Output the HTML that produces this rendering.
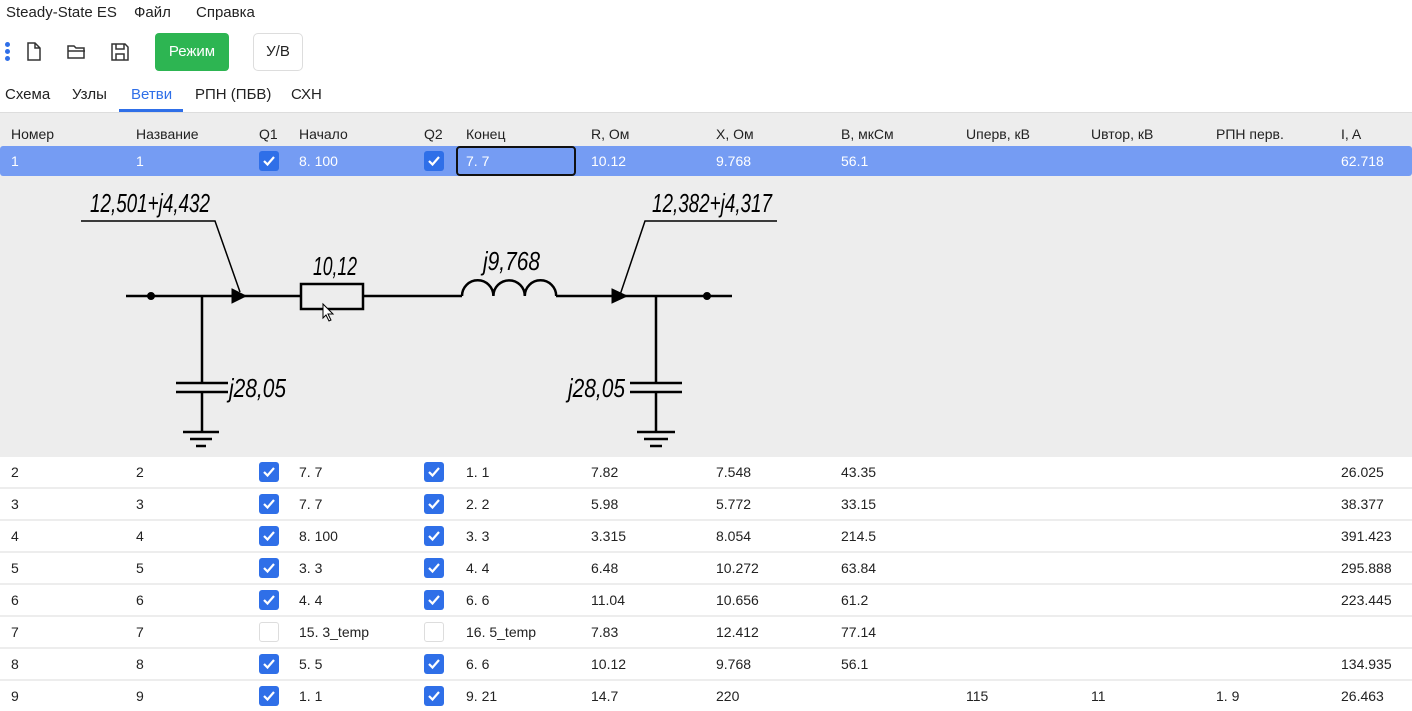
<!DOCTYPE html>
<html><head><meta charset="utf-8"><style>
*{margin:0;padding:0;box-sizing:border-box}
body{width:1412px;height:711px;overflow:hidden;background:#fff;font-family:"Liberation Sans","DejaVu Sans",sans-serif;font-size:14px;color:#222;position:relative}
.a{position:absolute;white-space:nowrap}
.row{position:absolute;left:0;width:1412px;height:30px;background:#fff}
.row span{position:absolute;top:7px}
.cb{position:absolute;width:20px;height:20px;border-radius:3px;background:#2f6fe8;top:5px}
.cb.e{background:#fff;border:1px solid #ddd}
.cb svg{position:absolute;left:3px;top:4px}
</style></head><body>
<div class="a" style="left:6px;top:4px;font-size:15px">Steady-State ES</div>
<div class="a" style="left:134px;top:4px;font-size:15px">Файл</div>
<div class="a" style="left:196px;top:4px;font-size:15px">Справка</div>
<div class="a" style="left:5px;top:42px;width:5px;height:5px;border-radius:50%;background:#2f6fe8"></div>
<div class="a" style="left:5px;top:49px;width:5px;height:5px;border-radius:50%;background:#2f6fe8"></div>
<div class="a" style="left:5px;top:56px;width:5px;height:5px;border-radius:50%;background:#2f6fe8"></div>
<svg class="a" style="left:25px;top:42px" width="18" height="20" viewBox="0 0 18 20" fill="none" stroke="#333" stroke-width="1.5"><path d="M3 1h7l5 5v12H3z M10 1v5h5"/></svg>
<svg class="a" style="left:66px;top:43px" width="22" height="18" viewBox="0 0 22 18" fill="none" stroke="#333" stroke-width="1.5"><path d="M2 3h6l2 2h8v10H2z M2 8h17"/></svg>
<svg class="a" style="left:110px;top:42px" width="20" height="20" viewBox="0 0 20 20" fill="none" stroke="#333" stroke-width="1.5"><path d="M2 2h13l3 3v13H2z M6 2v5h8V2 M6 18v-6h8v6"/></svg>
<div class="a" style="left:155px;top:33px;width:74px;height:38px;border-radius:4px;background:#2db552;color:#fff;font-size:15px;text-align:center;line-height:38px">Режим</div>
<div class="a" style="left:253px;top:33px;width:50px;height:38px;border-radius:5px;border:1px solid #ddd;font-size:15px;text-align:center;line-height:36px">У/В</div>
<div class="a" style="left:5px;top:86px;font-size:15px">Схема</div>
<div class="a" style="left:72px;top:86px;font-size:15px">Узлы</div>
<div class="a" style="left:131px;top:86px;font-size:15px;color:#2f6fe8">Ветви</div>
<div class="a" style="left:119px;top:109px;width:64px;height:3px;background:#2f6fe8"></div>
<div class="a" style="left:195px;top:86px;font-size:15px">РПН (ПБВ)</div>
<div class="a" style="left:291px;top:86px;font-size:15px">СХН</div>
<div class="a" style="left:0;top:112px;width:1412px;height:599px;background:#ededed;border-top:1px solid #ddd"></div>
<div class="a" style="left:11px;top:126px">Номер</div><div class="a" style="left:136px;top:126px">Название</div><div class="a" style="left:259px;top:126px">Q1</div><div class="a" style="left:299px;top:126px">Начало</div><div class="a" style="left:424px;top:126px">Q2</div><div class="a" style="left:466px;top:126px">Конец</div><div class="a" style="left:591px;top:126px">R, Ом</div><div class="a" style="left:716px;top:126px">X, Ом</div><div class="a" style="left:841px;top:126px">B, мкСм</div><div class="a" style="left:966px;top:126px">Uперв, кВ</div><div class="a" style="left:1091px;top:126px">Uвтор, кВ</div><div class="a" style="left:1216px;top:126px">РПН перв.</div><div class="a" style="left:1341px;top:126px">I, A</div>
<div class="row" style="top:146px;background:#759cf3;color:#fff;border-radius:3px"><span style="left:11px">1</span><span style="left:136px">1</span><div class="cb" style="left:259px"><svg width="14" height="12"><path d="M2 6l3.5 3.5L12 2" stroke="#fff" stroke-width="2.2" fill="none"/></svg></div><span style="left:299px">8. 100</span><div class="cb" style="left:424px"><svg width="14" height="12"><path d="M2 6l3.5 3.5L12 2" stroke="#fff" stroke-width="2.2" fill="none"/></svg></div><div style="position:absolute;left:456px;top:0;width:120px;height:30px;border:2px solid #111;border-radius:4px"></div><span style="left:466px">7. 7</span><span style="left:591px">10.12</span><span style="left:716px">9.768</span><span style="left:841px">56.1</span><span style="left:1341px">62.718</span></div>
<svg class="a" style="left:0;top:176px" width="800" height="280" viewBox="0 176 800 280" font-family="Liberation Sans, sans-serif" font-style="italic" font-weight="300" font-size="26" fill="none" stroke="#000">
<g stroke-width="2.5"><path d="M126 296H301M363 296H462M556 296H732"/><rect x="301" y="284" width="62" height="25"/><path d="M462 296a15.7 15.7 0 0 1 31.4 0a15.7 15.7 0 0 1 31.4 0a15.7 15.7 0 0 1 31.4 0"/>
<path d="M202 296V383M202 392V432M176 383H228M176 392H228M656 296V383M656 392V432M630 383H682M630 392H682M183 432H219M190 439H212M196 446H206M637 432H675M644 439H668M650 446H662"/></g>
<g stroke-width="1.5"><path d="M81 221H215L240 292M777 221H645L620 295"/></g>
<path d="M232 289L246 296L232 303Z M612 289L627 296L612 303Z" fill="#000"/>
<circle cx="151" cy="296" r="3.5" fill="#000"/><circle cx="707" cy="296" r="3.5" fill="#000"/>
<path d="M323 304v14l3-3 3 6 2-1-3-6h5z" fill="#fff" stroke="#000" stroke-width="1"/>
<g fill="#000" stroke="none"><text x="90" y="212" textLength="120" lengthAdjust="spacingAndGlyphs">12,501+j4,432</text><text x="652" y="212" textLength="120" lengthAdjust="spacingAndGlyphs">12,382+j4,317</text><text x="313" y="275" textLength="44" lengthAdjust="spacingAndGlyphs">10,12</text><text x="483" y="270" textLength="57" lengthAdjust="spacingAndGlyphs">j9,768</text><text x="229" y="397" textLength="57" lengthAdjust="spacingAndGlyphs">j28,05</text><text x="568" y="397" textLength="57" lengthAdjust="spacingAndGlyphs">j28,05</text></g>
</svg>
<div id="rows"></div>
<script>
var d=[["2","2",1,"7. 7",1,"1. 1","7.82","7.548","43.35","","","","26.025"],["3","3",1,"7. 7",1,"2. 2","5.98","5.772","33.15","","","","38.377"],["4","4",1,"8. 100",1,"3. 3","3.315","8.054","214.5","","","","391.423"],["5","5",1,"3. 3",1,"4. 4","6.48","10.272","63.84","","","","295.888"],["6","6",1,"4. 4",1,"6. 6","11.04","10.656","61.2","","","","223.445"],["7","7",0,"15. 3_temp",0,"16. 5_temp","7.83","12.412","77.14","","","",""],["8","8",1,"5. 5",1,"6. 6","10.12","9.768","56.1","","","","134.935"],["9","9",1,"1. 1",1,"9. 21","14.7","220","","115","11","1. 9","26.463"]];
var xs=[11,136,259,299,424,466,591,716,841,966,1091,1216,1341],h="";
var ck='<svg width="14" height="12"><path d="M2 6l3.5 3.5L12 2" stroke="#fff" stroke-width="2.2" fill="none"/></svg>';
d.forEach(function(r,i){h+='<div class="row" style="top:'+(457+i*32)+'px">';r.forEach(function(v,j){if(j==2||j==4)h+='<div class="cb'+(v?'':' e')+'" style="left:'+xs[j]+'px">'+(v?ck:'')+'</div>';else h+='<span style="left:'+xs[j]+'px">'+v+'</span>';});h+='</div>';});
document.getElementById("rows").innerHTML=h;
</script>
</body></html>
